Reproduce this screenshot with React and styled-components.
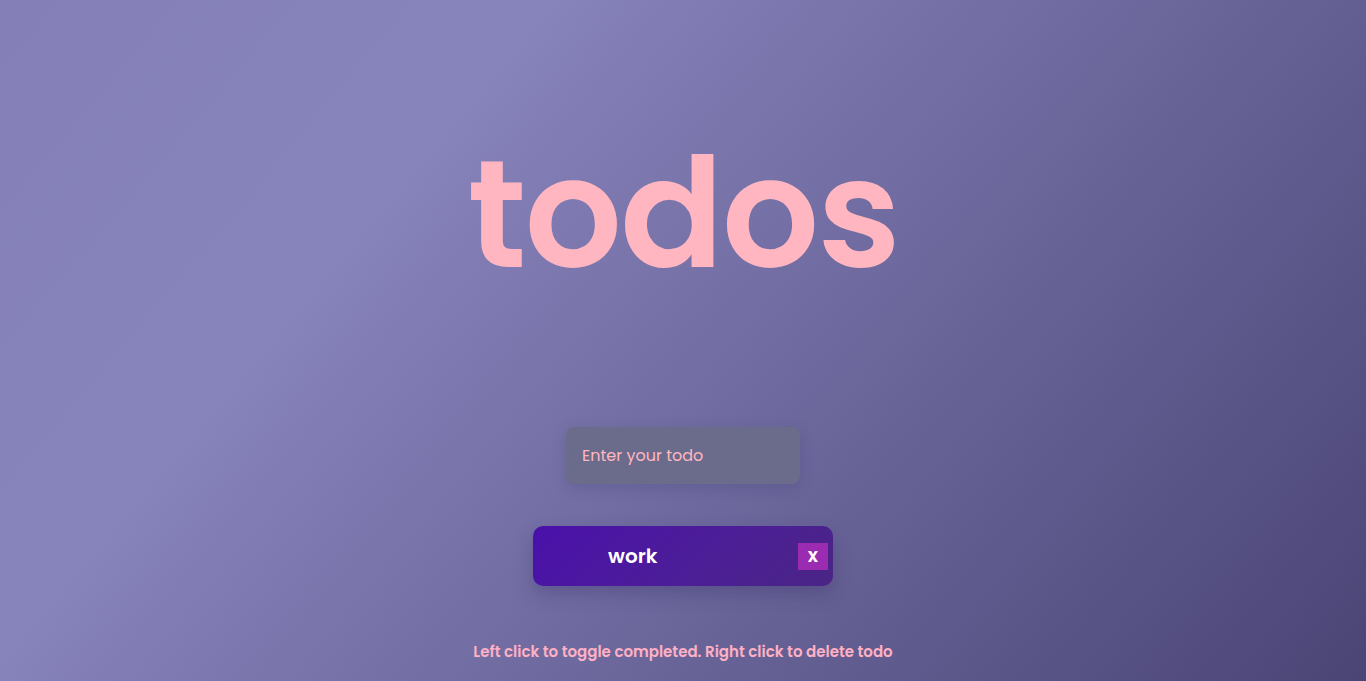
import React from "react";
import styled, { createGlobalStyle } from "styled-components";

const Global = createGlobalStyle`
  html, body { margin: 0; padding: 0; height: 100%; }
  body {
    font-family: "Poppins", "Inter", "Noto Sans", sans-serif;
    background: linear-gradient(130deg, #8480b7 0%, #8783bb 28%, #4a4575 100%);
    min-height: 681px;
    overflow: hidden;
  }
`;

const Page = styled.main`
  height: 681px;
  display: flex;
  flex-direction: column;
  align-items: center;
`;

const Title = styled.h1`
  margin: 137px 0 0;
  font-size: 153px;
  line-height: 1;
  font-weight: 600;
  letter-spacing: -2px;
  color: #ffb6c1;
`;

const Form = styled.form`
  margin-top: 137px;
`;

const Input = styled.input`
  box-sizing: border-box;
  width: 234px;
  height: 57px;
  border: none;
  outline: none;
  border-radius: 8px;
  padding: 0 16px;
  background: #6b6b8b;
  color: #ffb6c1;
  font-family: inherit;
  font-size: 16px;
  box-shadow: 0 4px 14px rgba(60, 55, 110, 0.25);
  &::placeholder { color: #ffb6c1; }
`;

const List = styled.ul`
  list-style: none;
  margin: 42px 0 0;
  padding: 0;
`;

const Item = styled.li`
  box-sizing: border-box;
  width: 300px;
  height: 60px;
  border-radius: 10px;
  background: linear-gradient(135deg, #4a10aa 0%, #4c1e98 55%, #4a2585 100%);
  box-shadow: 0 8px 18px rgba(50, 40, 100, 0.3);
  display: flex;
  align-items: center;
  justify-content: space-between;
  padding: 0 5px 0 75px;
  color: #fff;
  font-weight: 600;
  font-size: 20px;
`;

const Remove = styled.button`
  width: 30px;
  height: 27px;
  border: none;
  padding: 0 0 2px;
  background: #9b2cb2;
  color: #fff;
  font-family: inherit;
  font-weight: 600;
  font-size: 19px;
  line-height: 1;
  cursor: pointer;
`;

const Hint = styled.p`
  margin: 54px 0 0;
  font-size: 15px;
  font-weight: 600;
  color: #ffb0c4;
`;

export default function App() {
  return (
    <>
      <Global />
      <Page>
        <Title>todos</Title>
        <Form onSubmit={(e) => e.preventDefault()}>
          <Input placeholder="Enter your todo" />
        </Form>
        <List>
          <Item>
            <span>work</span>
            <Remove type="button">x</Remove>
          </Item>
        </List>
        <Hint>Left click to toggle completed. Right click to delete todo</Hint>
      </Page>
    </>
  );
}
